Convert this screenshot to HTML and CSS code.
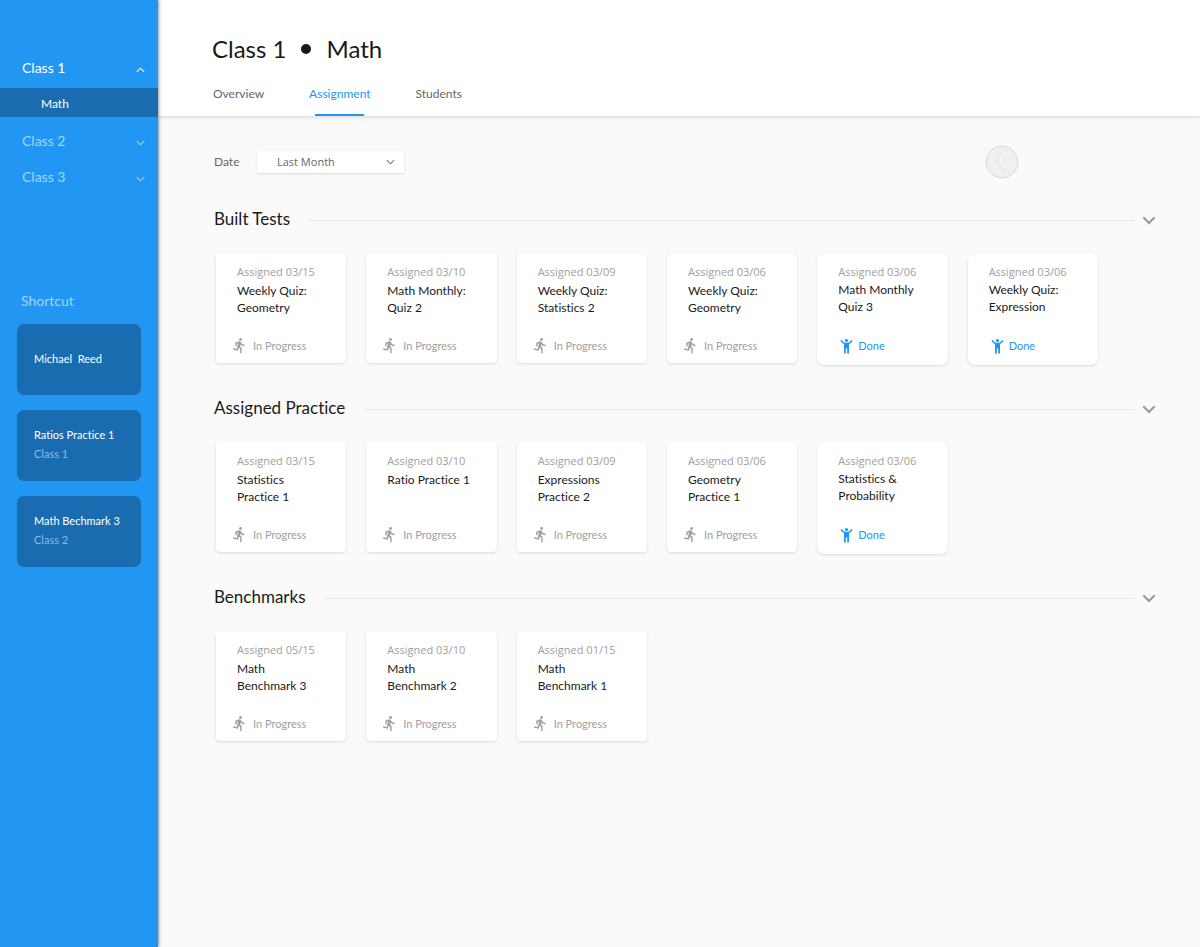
FILE: index.html
```html
<!DOCTYPE html>
<html lang="en">
<head>
<meta charset="utf-8">
<title>Class 1 - Math assignments</title>
<link rel="stylesheet" href="styles.css">
</head>
<body>
<svg class="sprite" aria-hidden="true">
  <symbol id="down" viewBox="0 0 10 6"><path d="M1 1l4 4 4-4" fill="none" stroke="currentColor" stroke-width="1.2"/></symbol>
  <symbol id="down-bold" viewBox="0 0 14 9"><path d="M1.3 1.3L7 7l5.700-5.700" fill="none" stroke="currentColor" stroke-width="2"/></symbol>
  <symbol id="run" viewBox="0 0 24 24"><path fill="currentColor" d="M13.49 5.48c1.1 0 2-.9 2-2s-.9-2-2-2-2 .9-2 2 .9 2 2 2zm-3.6 13.9l1-4.4 2.1 2v6h2v-7.5l-2.1-2 .6-3c1.3 1.5 3.3 2.5 5.5 2.500v-2c-1.900 0-3.500-1-4.300-2.400l-1-1.600c-.4-.6-1-1-1.700-1-.3 0-.5.1-.8.1l-5.200 2.200v4.700h2v-3.400l1.800-.7-1.600 8.100-4.900-1-.4 2 7 1.400z"/></symbol>
  <symbol id="cheer" viewBox="0 0 16 16"><circle cx="8.500" cy="2.500" r="1.600" fill="currentColor"/><path fill="currentColor" d="M6 5h5v10.500H9.200V10.500H7.800v5H6z"/><path d="M3 2.300Q4.500 4.700 6.700 5.600H10.300Q12.500 4.700 14 2.300" fill="none" stroke="currentColor" stroke-width="1.500"/></symbol>
</svg>
<div class="app">
  <aside class="sidebar">
    <nav class="classes" aria-label="Classes">
      <button class="class-toggle is-open" type="button" aria-expanded="true">Class 1<svg class="chevron chevron-up"><use href="#down"/></svg></button>
      <a class="subject" href="#math">Math</a>
      <button class="class-toggle" type="button" aria-expanded="false">Class 2<svg class="chevron"><use href="#down"/></svg></button>
      <button class="class-toggle" type="button" aria-expanded="false">Class 3<svg class="chevron"><use href="#down"/></svg></button>
    </nav>
    <section class="shortcuts">
      <h2 class="shortcuts-title">Shortcut</h2>
      <a class="shortcut" href="#reed"><span>Michael &nbsp;Reed</span></a>
      <a class="shortcut" href="#ratios"><span>Ratios Practice 1</span><span class="shortcut-class">Class 1</span></a>
      <a class="shortcut" href="#benchmark3"><span>Math Bechmark 3</span><span class="shortcut-class">Class 2</span></a>
    </section>
  </aside>
  <div class="page">
    <header class="page-header">
      <h1 class="title"><span>Class 1</span><span class="dot"></span><span>Math</span></h1>
      <nav class="tabs" aria-label="Sections">
        <a class="tab" href="#overview">Overview</a>
        <a class="tab is-active" href="#assignment" aria-current="page">Assignment</a>
        <a class="tab" href="#students">Students</a>
      </nav>
    </header>
    <main class="content">
      <div class="filters">
        <label class="filter-label" for="date">Date</label>
        <span class="select-box">
          <select class="select" id="date"><option>Last Month</option></select>
          <svg class="chevron select-chevron"><use href="#down"/></svg>
        </span>
        <svg class="pointer" viewBox="0 0 34 34" aria-hidden="true"><circle cx="17" cy="17" r="16" fill="#f0f0f0" stroke="#d8d8d8"/><path d="M16 7Q10 12 13 18T26 29" fill="none" stroke="#dcdcdc" stroke-dasharray="2 1"/></svg>
      </div>

      <section class="group">
        <div class="group-head"><h2 class="group-title">Built Tests</h2><span class="rule"></span><button class="collapse" type="button" aria-label="Collapse Built Tests"><svg><use href="#down-bold"/></svg></button></div>
        <div class="cards">
          <article class="card"><p class="date">Assigned 03/15</p><h3 class="name">Weekly Quiz:<br>Geometry</h3><p class="status"><svg><use href="#run"/></svg>In Progress</p></article>
          <article class="card"><p class="date">Assigned 03/10</p><h3 class="name">Math Monthly:<br>Quiz 2</h3><p class="status"><svg><use href="#run"/></svg>In Progress</p></article>
          <article class="card"><p class="date">Assigned 03/09</p><h3 class="name">Weekly Quiz:<br>Statistics 2</h3><p class="status"><svg><use href="#run"/></svg>In Progress</p></article>
          <article class="card"><p class="date">Assigned 03/06</p><h3 class="name">Weekly Quiz:<br>Geometry</h3><p class="status"><svg><use href="#run"/></svg>In Progress</p></article>
          <article class="card is-done"><p class="date">Assigned 03/06</p><h3 class="name">Math Monthly<br>Quiz 3</h3><p class="status"><svg><use href="#cheer"/></svg>Done</p></article>
          <article class="card is-done"><p class="date">Assigned 03/06</p><h3 class="name">Weekly Quiz:<br>Expression</h3><p class="status"><svg><use href="#cheer"/></svg>Done</p></article>
        </div>
      </section>

      <section class="group">
        <div class="group-head"><h2 class="group-title">Assigned Practice</h2><span class="rule"></span><button class="collapse" type="button" aria-label="Collapse Assigned Practice"><svg><use href="#down-bold"/></svg></button></div>
        <div class="cards">
          <article class="card"><p class="date">Assigned 03/15</p><h3 class="name">Statistics<br>Practice 1</h3><p class="status"><svg><use href="#run"/></svg>In Progress</p></article>
          <article class="card"><p class="date">Assigned 03/10</p><h3 class="name">Ratio Practice 1</h3><p class="status"><svg><use href="#run"/></svg>In Progress</p></article>
          <article class="card"><p class="date">Assigned 03/09</p><h3 class="name">Expressions<br>Practice 2</h3><p class="status"><svg><use href="#run"/></svg>In Progress</p></article>
          <article class="card"><p class="date">Assigned 03/06</p><h3 class="name">Geometry<br>Practice 1</h3><p class="status"><svg><use href="#run"/></svg>In Progress</p></article>
          <article class="card is-done"><p class="date">Assigned 03/06</p><h3 class="name">Statistics &amp;<br>Probability</h3><p class="status"><svg><use href="#cheer"/></svg>Done</p></article>
        </div>
      </section>

      <section class="group">
        <div class="group-head"><h2 class="group-title">Benchmarks</h2><span class="rule"></span><button class="collapse" type="button" aria-label="Collapse Benchmarks"><svg><use href="#down-bold"/></svg></button></div>
        <div class="cards">
          <article class="card"><p class="date">Assigned 05/15</p><h3 class="name">Math<br>Benchmark 3</h3><p class="status"><svg><use href="#run"/></svg>In Progress</p></article>
          <article class="card"><p class="date">Assigned 03/10</p><h3 class="name">Math<br>Benchmark 2</h3><p class="status"><svg><use href="#run"/></svg>In Progress</p></article>
          <article class="card"><p class="date">Assigned 01/15</p><h3 class="name">Math<br>Benchmark 1</h3><p class="status"><svg><use href="#run"/></svg>In Progress</p></article>
        </div>
      </section>
    </main>
  </div>
</div>
</body>
</html>
```
FILE: styles.css
```css
* { box-sizing: border-box; }
body { margin: 0; font-family: Lato, sans-serif; font-variant-ligatures: none; color: #1a1a1a; background: #fafafa; }
h1, h2, h3, p { margin: 0; font-weight: 400; }
a { color: inherit; text-decoration: none; }
button { border: 0; padding: 0; background: none; font: inherit; color: inherit; cursor: pointer; }
.sprite { display: none; }

.app { display: flex; min-height: 100vh; }

/* Sidebar */
.sidebar { flex: 0 0 158px; z-index: 1; padding-top: 50px; background: #2196f3; box-shadow: 1px 0 3px rgba(0, 0, 0, .4); color: #fff; }
.classes { display: flex; flex-direction: column; }
.class-toggle { display: flex; align-items: center; justify-content: space-between; height: 36px; padding: 0 13px 4px 22px; font-size: 14px; color: #a6d5fa; }
.class-toggle.is-open { height: 38px; color: #fff; }
.class-toggle .chevron { margin-top: 5px; }
.chevron { width: 9px; height: 6px; }
.chevron-up { transform: rotate(180deg); }
.subject { height: 29px; margin-bottom: 7px; padding-left: 41px; background: #1a6cb0; font-size: 12px; line-height: 31px; }
.shortcuts { display: flex; flex-direction: column; gap: 15px; margin-top: 97px; padding: 0 17px; }
.shortcuts-title { margin-left: 4px; font-size: 14px; line-height: 16px; color: #a6d5fa; }
.shortcut { display: flex; flex-direction: column; justify-content: center; height: 71px; padding: 0 0 3px 17px; border-radius: 7px; background: #1a6cb0; font-size: 11px; line-height: 19px; }
.shortcut-class { color: #8cbbe2; }

/* Header */
.page { flex: 1; min-width: 0; }
.page-header { padding: 33px 54px 0; background: #fff; box-shadow: 0 1px 4px rgba(0, 0, 0, .15); }
.title { display: flex; align-items: center; gap: 15px; font-size: 24px; line-height: 32px; }
.dot { width: 10px; height: 10px; border-radius: 50%; background: #1a1a1a; }
.tabs { display: flex; gap: 45px; margin-top: 17px; padding-left: 1px; font-size: 12px; color: #666; }
.tab { display: flex; flex-direction: column; align-items: center; justify-content: space-between; height: 34px; line-height: 24px; }
.tab.is-active { color: #2196f3; }
.tab.is-active::after { content: ""; width: 49px; height: 2px; background: #2196f3; }

/* Filters */
.content { padding: 29px 44px 40px 56px; }
.filters { display: flex; align-items: center; height: 34px; margin-bottom: 28px; }
.filter-label { width: 43px; font-size: 12px; line-height: 16px; color: #666; }
.select-box { display: flex; align-items: center; width: 147px; height: 22px; background: #fff; box-shadow: 0 1px 2px rgba(0, 0, 0, .12); }
.select { flex: 1; height: 22px; padding: 0 0 1px 20px; border: 0; background: transparent; appearance: none; font: 11px "Open Sans", sans-serif; color: #666; }
.select-chevron { margin-right: 9px; color: #777; pointer-events: none; }
.pointer { width: 34px; height: 34px; margin: 0 137px 0 auto; }

/* Assignment groups */
.group + .group { margin-top: 31px; }
.group-head { display: flex; align-items: center; height: 24px; margin-bottom: 22px; }
.group-title { font-size: 17px; line-height: 24px; }
.rule { flex: 1; height: 1px; margin: 3px 7px 0 18px; background: #e8e8e8; }
.collapse { display: flex; padding-top: 3px; color: #999; }
.collapse svg { width: 14px; height: 9px; }
.cards { display: grid; grid-template-columns: repeat(6, minmax(0, 1fr)); gap: 20px; align-items: start; min-height: 112px; margin: 0 58px 0 2px; }
.card { height: 110px; padding: 11px 8px 0 21px; border-radius: 4px; background: #fff; box-shadow: 0 1px 3px rgba(0, 0, 0, .13); }
.date { font-family: "Open Sans", sans-serif; font-size: 11px; line-height: 16px; color: #a0a0a0; white-space: nowrap; }
.name { min-height: 34px; margin-top: 2px; font-size: 12px; line-height: 17px; white-space: nowrap; }
.status { display: flex; align-items: center; gap: 5px; margin: 21px 0 0 -6px; font-size: 11px; line-height: 17px; color: #a0a0a0; }
.status svg { width: 17px; height: 17px; }
.is-done { height: 112px; border-radius: 7px; }
.is-done .name { margin-top: 1px; }
.is-done .status { gap: 4px; margin: 22px 0 0; color: #2196f3; }
.is-done .status svg { width: 16px; height: 16px; }
```
